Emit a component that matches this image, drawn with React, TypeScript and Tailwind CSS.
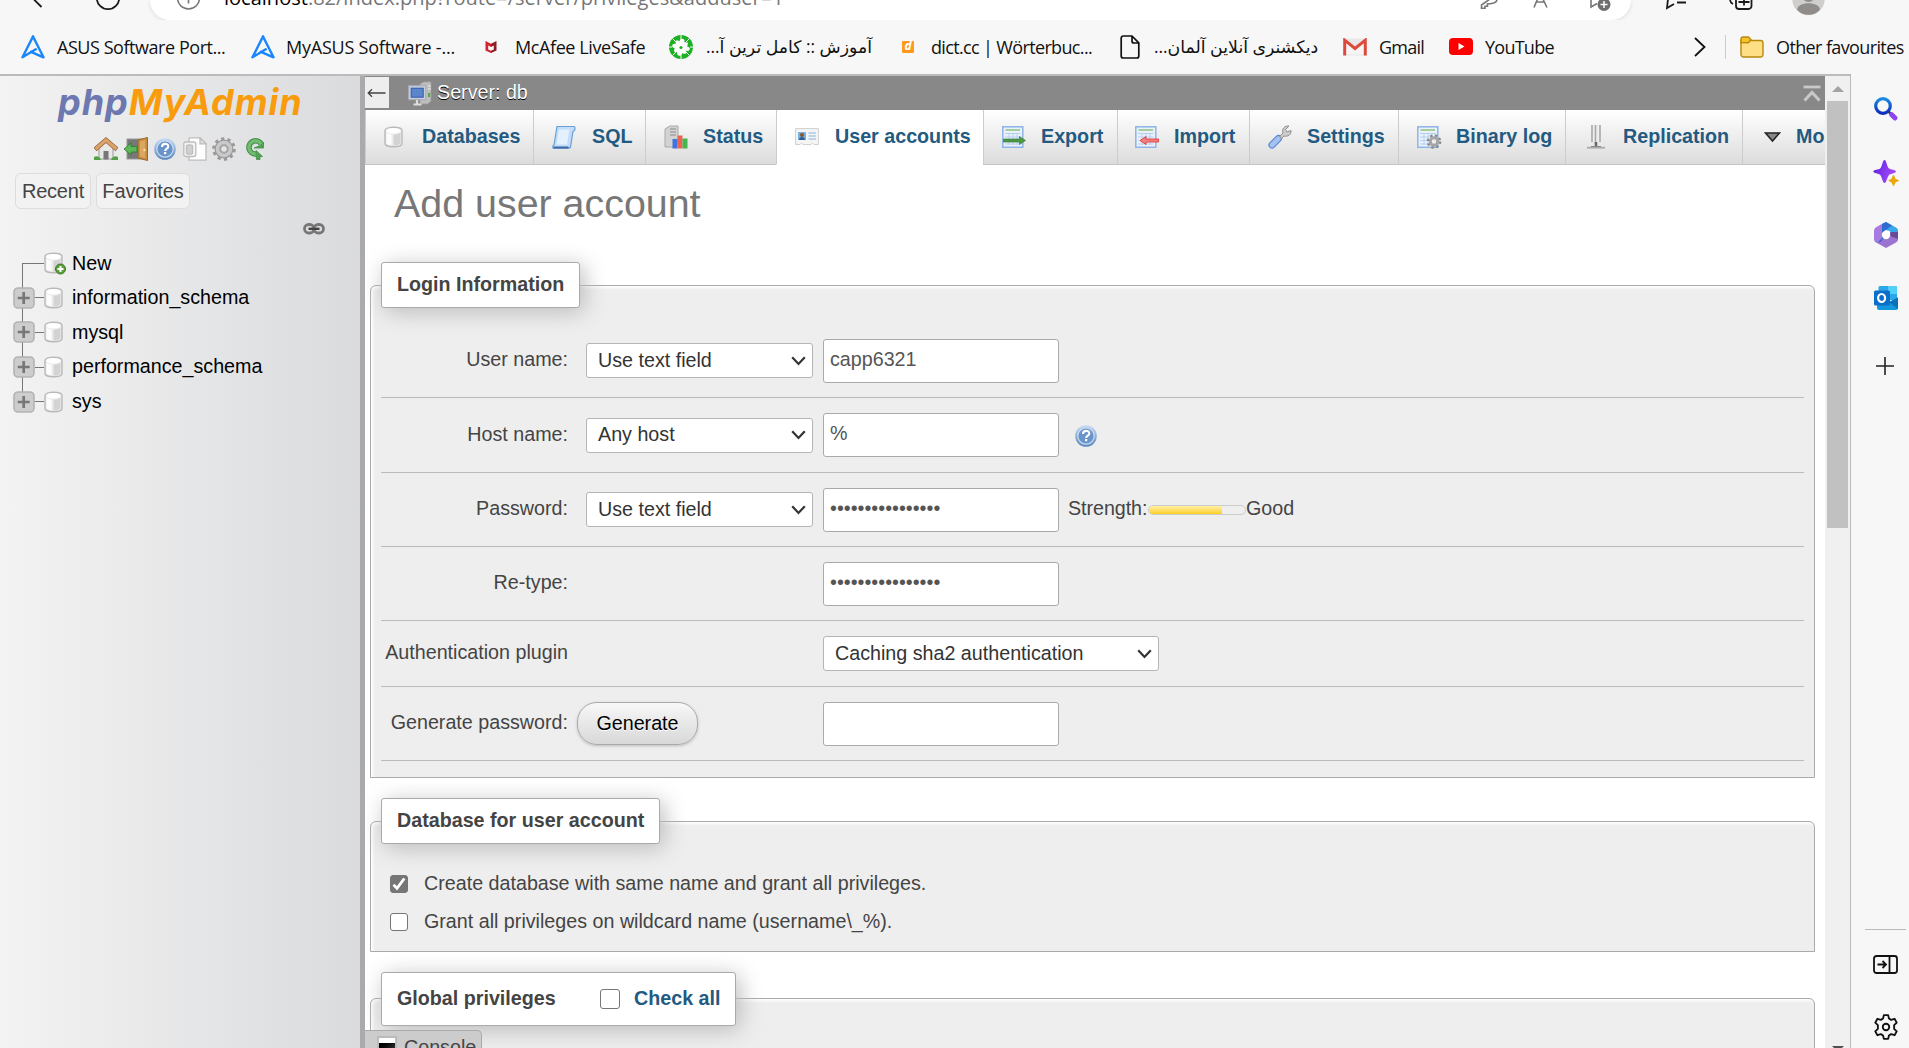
import React from "react";

type Kids = { children?: React.ReactNode };

/* ---------- Browser icons ---------- */

const AsusIcon = () => (
  <svg width="24" height="24" viewBox="0 0 24 24" fill="none" stroke="#1a86fb" strokeWidth="2.4" strokeLinejoin="round" strokeLinecap="round">
    <path d="M12 1.500 1.500 22.300 14.800 14.300" />
    <path d="M12 1.500 22.500 22.300 10 16.800" />
  </svg>
);

const McAfeeIcon = () => (
  <svg width="12" height="12" viewBox="0 0 12 12">
    <path d="M.5 0 6 2.8V6L3.2 4.6v4L6 9.8V12L.5 9.6z" fill="#d2232f" />
    <path d="M11.500 0 6 2.8V6l2.800-1.400v4L6 9.800V12l5.500-2.400z" fill="#8f1d24" />
  </svg>
);

const PuzzleIcon = () => (
  <svg width="24" height="24" viewBox="0 0 24 24">
    <circle cx="12" cy="12" r="12" fill="#1cb022" />
    <path d="M6 6.500h3.500c-1.200-3.800 6-3.800 4.600 0H18v4c4-1.300 4 5 0 3.800V18h-3.700c1.200 3.800-5.800 3.800-4.600 0H6v-3.700c-3.800 1.200-3.800-5.100 0-3.800z" fill="#fff" transform="rotate(12 12 12)" />
    <path d="M12 0v4M12 20v4M0 12h3M21 12h3M3.500 3.500 7 7M17 7l3.500-3.500M3.500 20.500 7 17M17 17l3.500 3.500" stroke="#fff" strokeWidth="1" />
    <circle cx="12" cy="12.500" r="1.600" fill="#1cb022" />
  </svg>
);

const FileIcon = () => (
  <svg width="20" height="24" viewBox="0 0 20 24" fill="none" stroke="#111" strokeWidth="1.700" strokeLinejoin="round">
    <path d="M3.500 1H12l6.800 6.800V21a2 2 0 0 1-2 2H3.200a2 2 0 0 1-2-2V3a2 2 0 0 1 2-2zM12 1v5a2 2 0 0 0 2 2h4.800" />
  </svg>
);

const GmailIcon = () => (
  <svg width="24" height="18" viewBox="0 0 24 18">
    <rect x="1" y="0.500" width="22" height="17" rx="1.500" fill="#e9e7e7" />
    <path d="M3 16.500V3l9 7 9-7v13.500z" fill="#f6f4f4" />
    <path d="M1.700 17.500V2.200L12 10.500 22.300 2.200v15.300" fill="none" stroke="#dc4a3d" strokeWidth="3" />
  </svg>
);

const YoutubeIcon = () => (
  <svg width="24" height="18" viewBox="0 0 24 18">
    <rect width="24" height="17" rx="4" fill="#f00" />
    <path d="M9.500 5v7l6-3.500z" fill="#fff" />
  </svg>
);

const FolderIcon = () => (
  <svg width="24" height="22" viewBox="0 0 24 22" stroke="#b8890b" strokeWidth="1.400">
    <path d="M1 4.500h19.500A2.500 2.500 0 0 1 23 7v11.500a2.500 2.500 0 0 1-2.500 2.500h-17A2.500 2.500 0 0 1 1 18.500z" fill="#ffdf85" />
    <path d="M1 6.500V3a2 2 0 0 1 2-2h5.500l2.500 2.800-2.700 2.900z" fill="#f4c32c" />
  </svg>
);

/* ---------- phpMyAdmin icons ---------- */

const Cylinder = () => (
  <g>
    <path d="M1 4.500C1 .2 18 .2 18 4.500v13c0 4.300-17 4.300-17 0z" fill="#ececec" stroke="#b9b9b9" strokeWidth="1.400" />
    <path d="M2.500 6.500v10.500c1 1.300 3 1.900 5 2.200V8.500c-2-.2-4-.9-5-2z" fill="#fcfcfc" />
    <path d="M9.500 8.700v10.700c2.500 0 5.500-.7 7-2V6.500c-1.500 1.500-4.500 2.200-7 2.200z" fill="#d3d3d3" />
    <ellipse cx="9.500" cy="4.800" rx="7.300" ry="2.800" fill="#fff" />
  </g>
);

const DbIcon = () => (
  <svg width="19" height="22" viewBox="0 0 19 22" className="shrink-0"><Cylinder /></svg>
);

const DbNewIcon = () => (
  <svg width="22" height="23" viewBox="0 0 22 23" className="shrink-0">
    <Cylinder />
    <circle cx="16.500" cy="17" r="5" fill="#5aa13c" stroke="#39761f" />
    <path d="M16.500 14v6M13.500 17h6" stroke="#fff" strokeWidth="2" />
  </svg>
);

const PlusBox = () => (
  <svg width="22" height="22" viewBox="0 0 22 22" className="relative shrink-0">
    <rect x="1" y="1" width="20" height="20" rx="4" fill="#cdcdcd" stroke="#b3b3b3" strokeWidth="1.600" />
    <path d="M10.700 5v12M4.700 11h12" stroke="#777" strokeWidth="2.700" />
  </svg>
);

const HelpIcon = () => (
  <svg width="22" height="22" viewBox="0 0 22 22" className="shrink-0">
    <defs>
      <linearGradient id="hg" x1="0" y1="0" x2="0" y2="1">
        <stop offset="0" stopColor="#c7dcf3" /><stop offset="1" stopColor="#5b87bd" />
      </linearGradient>
    </defs>
    <circle cx="11" cy="11" r="10.800" fill="url(#hg)" />
    <circle cx="11" cy="11" r="8.200" fill="#6894cb" stroke="#c9dcf2" strokeWidth="1.200" />
    <path d="M8 9c0-4.200 6.300-4 6.300-.6 0 2.300-3.100 2.300-3.100 4.500" fill="none" stroke="#fff" strokeWidth="2.100" />
    <rect x="10" y="14" width="2.300" height="2.200" fill="#fff" />
  </svg>
);

const HomeIcon = () => (
  <svg width="24" height="24" viewBox="0 0 24 24">
    <path d="M5 10v12h14V10l-7-6z" fill="#e8e8e6" stroke="#999" />
    <rect x="9.500" y="14" width="5" height="8.500" fill="#777" />
    <path d="M1 12.500 12 3l11 9.500" fill="none" stroke="#9b6a3a" strokeWidth="4.600" />
    <path d="M1.500 12 12 3l10.500 9" fill="none" stroke="#d9a36b" strokeWidth="3" />
    <path d="M0 20c3-2 6 0 7 3H0zM24 20c-3-2-6 0-7 3h7z" fill="#55a047" />
  </svg>
);

const ExitIcon = () => (
  <svg width="24" height="24" viewBox="0 0 24 24">
    <rect x="3" y="2" width="15" height="20" fill="#777" stroke="#999" />
    <path d="M14 3 23.500.5v23L14 21z" fill="#c98f45" stroke="#9c6527" />
    <path d="M16 4.500 21 3v18l-5-1.500z" fill="#dba863" />
    <circle cx="20.500" cy="13" r="1.200" fill="#ffe08a" />
    <path d="M0 12 7 6v3.500h6v5.500H7v3z" fill="#5cb85a" stroke="#2c7a2d" strokeWidth=".8" />
  </svg>
);

const DocsIcon = () => (
  <svg width="24" height="24" viewBox="0 0 24 24" stroke="#bdbdbd" strokeWidth="1.300">
    <path d="M6 .8h11l6 6v16.400H6z" fill="#fdfdfd" />
    <path d="M17 .8v6h6z" fill="#dedede" />
    <rect x=".8" y="5" width="12" height="14.500" rx="2" fill="#f4f4f4" />
    <path d="M3.500 9c0-1.600 6-1.600 6 0v7c0 1.600-6 1.600-6 0z" fill="#d0d0d0" />
  </svg>
);

const CogIcon = () => (
  <svg width="24" height="24" viewBox="0 0 24 24" fill="none">
    <circle cx="12" cy="12" r="10" stroke="#999" strokeWidth="3.600" strokeDasharray="3.140 3.140" />
    <circle cx="12" cy="12" r="6.500" stroke="#9c9c9c" strokeWidth="6" />
    <circle cx="12" cy="12" r="6.500" stroke="#c9c9c9" strokeWidth="3.600" />
    <circle cx="12" cy="12" r="3.400" fill="#e6e6e6" stroke="#999" />
  </svg>
);

const ReloadIcon = () => (
  <svg width="20" height="23" viewBox="0 0 20 23">
    <path d="M16.500 7.500A6.600 6.600 0 1 0 11 17" fill="none" stroke="#3f8f42" strokeWidth="5.600" />
    <path d="M16.500 7.500A6.600 6.600 0 1 0 11 17" fill="none" stroke="#72bb70" strokeWidth="3.600" />
    <path d="M9 11h9.500V5.500l-3 3zM11 13.500l6.500 6h-2.500v3h-3.500z" fill="#51a353" stroke="#3f8f42" strokeWidth=".8" />
  </svg>
);

const ChainIcon = () => (
  <svg width="22" height="12" viewBox="0 0 22 12" fill="none">
    <rect x="1.500" y="1.500" width="9.500" height="8.500" rx="4.200" stroke="#777" strokeWidth="2.800" />
    <rect x="11" y="1.500" width="9.500" height="8.500" rx="4.200" stroke="#777" strokeWidth="2.800" />
    <path d="M5.500 5.800h11" stroke="#444" strokeWidth="2.400" />
  </svg>
);

const ServerIcon = () => (
  <svg width="24" height="25" viewBox="0 0 24 25">
    <path d="M12 3 16 .8h7V20l-3 3h-8z" fill="#bdbdbd" stroke="#999" strokeWidth=".8" />
    <path d="M20 5h3M20 8h3" stroke="#eee" strokeWidth="1.200" />
    <rect x="20" y="12" width="2" height="4" fill="#4fae46" />
    <rect x=".7" y="4.700" width="17" height="14" fill="#c9d0dc" stroke="#a7abb3" />
    <rect x="3.200" y="7.200" width="12" height="9" fill="#5c86cc" stroke="#2f57a5" />
    <path d="M9 19v4M5.500 23.500h8" stroke="#ddd" strokeWidth="2.200" />
  </svg>
);

const SqlIcon = () => (
  <svg width="24" height="24" viewBox="0 0 24 24">
    <path d="M5 1.500h17c1.500 0 1.500 4.500-1 5L18.500 22c-.3 1.200-1 1.200-2 1.200H1.500C.3 23.200.6 20 2 20z" fill="#c3dcf7" stroke="#6b9fd6" strokeWidth="1.200" />
    <path d="M7 4.500h10.500L15 19.500H4.500z" fill="#e3f0fd" />
    <path d="M1.500 22.500h15" stroke="#3d68a8" strokeWidth="2" />
  </svg>
);

const StatusIcon = () => (
  <svg width="25" height="24" viewBox="0 0 25 24">
    <path d="M1 4 6 1h8v17l-5 4H1z" fill="#d2d2d2" stroke="#a9a9a9" />
    <path d="M6 4h6M6 7h6M6 10h6" stroke="#8c8c8c" strokeWidth="1.200" />
    <rect x="8.500" y="14" width="5" height="9.500" fill="#3f73e0" />
    <rect x="13.500" y="10.500" width="5" height="13" fill="#ec6251" />
    <rect x="18.500" y="13.500" width="5" height="10" fill="#45b650" />
  </svg>
);

const UserCardIcon = () => (
  <svg width="24" height="18" viewBox="0 0 24 18">
    <path d="M.6.6h22.800v16H19l-1.500-1.500L16 16.600H8l-1.500-1.500L5 16.600H.6z" fill="#f5f5f5" stroke="#cfcfcf" />
    <rect x="3" y="4" width="8" height="8" fill="#78b0e8" />
    <circle cx="7" cy="7" r="2.100" fill="#8a5a2c" />
    <path d="M4 12c0-4 6-4 6 0z" fill="#2d5f9e" />
    <path d="M13.500 5H21M13.500 8H21M13.500 11H21" stroke="#a9c9e6" strokeWidth="1.400" />
  </svg>
);

const Sheet = () => (
  <g>
    <rect x=".8" y=".8" width="20" height="20.500" fill="#e9f1fc" stroke="#8fb3e6" strokeWidth="1.500" />
    <path d="M3.500 4h14.500" stroke="#8ec27e" strokeWidth="1.500" />
    <path d="M3 7.500h15.500M3 11h15.500M3 14.500h15.500M3 18h15.500M7 7v12M11 7v12M15 7v12" stroke="#b9cff0" strokeWidth="1" />
  </g>
);

const ExportIcon = () => (
  <svg width="24" height="22" viewBox="0 0 24 22"><Sheet />
    <path d="M1.500 13h16v-2.500l6 4-6 4v-2.500h-16z" fill="#4d9b45" stroke="#2c6e27" strokeWidth=".6" />
  </svg>
);
const ImportIcon = () => (
  <svg width="24" height="22" viewBox="0 0 24 22"><Sheet />
    <path d="M23.500 13H11v-2.500l-6 4 6 4v-2.500h12.500z" fill="#f08080" stroke="#e23b3b" strokeWidth=".9" />
  </svg>
);
const SettingsIcon = () => (
  <svg width="24" height="24" viewBox="0 0 24 24" strokeLinecap="round">
    <path d="M4 20 10.500 13.500" stroke="#5c86cf" strokeWidth="7.200" />
    <path d="M4 20 10.500 13.500" stroke="#a4c2f2" strokeWidth="4.800" />
    <path d="M12 11 15 8c-1.500-4 1.500-7.500 6-7l-3.500 3.500 1.500 2.500 4-1.500c.5 4-3 6.500-7 5.500l-2.500 2.500z" fill="#cbcbcb" stroke="#8e8e8e" />
  </svg>
);
const BinlogIcon = () => (
  <svg width="25" height="23" viewBox="0 0 25 23"><Sheet />
    <circle cx="17" cy="15.500" r="6" fill="none" stroke="#8a8a8a" strokeWidth="2.600" strokeDasharray="2.360 2.360" />
    <circle cx="17" cy="15.500" r="3.700" fill="#eee" stroke="#a5a5a5" strokeWidth="3" />
  </svg>
);
const ReplicationIcon = () => (
  <svg width="18" height="24" viewBox="0 0 18 24">
    <path d="M5 0v14l2 3.500h4l2-3.500V0" fill="#eee" />
    <path d="M5 0v17M8.500 0v19M13 0v17" stroke="#a9a9a9" strokeWidth="1.600" />
    <path d="M9 17v4" stroke="#666" strokeWidth="2.500" />
    <path d="M0 22.700h18" stroke="#aaa" strokeWidth="1.800" />
    <path d="M4 21.500h10" stroke="#888" strokeWidth="1" />
  </svg>
);

/* ---------- Browser chrome ---------- */

function AddressRow() {
  return (
    <div className="flex h-[20px] items-start overflow-hidden">
      <svg width="150" height="20" viewBox="0 0 150 20" fill="none" stroke="#1b1b1b" strokeWidth="1.800" className="shrink-0">
        <path d="M33.500-1 41.500 7" />
        <circle cx="108" cy="-2" r="11.200" />
      </svg>
      <div className="flex h-[20px] w-[1481px] shrink-0 items-start overflow-hidden rounded-b-[20px] bg-white shadow-[0_1px_4px_#ddd]">
        <svg width="74" height="20" viewBox="0 0 74 20" fill="none" stroke="#777" strokeWidth="1.600" className="shrink-0">
          <circle cx="38.500" cy="-2" r="11" />
          <path d="M38.500-2v5.500" />
        </svg>
        <div className="-mt-[18px] h-[30px] w-[1256px] shrink-0 whitespace-nowrap text-[20px] leading-[32px] tracking-[0.010px] text-[#767676]">
          <span className="text-black">localhost</span>:82/index.php?route=/server/privileges&amp;adduser=1
        </div>
        <svg width="151" height="20" viewBox="1480 0 151 20" fill="none" stroke="#777" strokeWidth="1.600">
          <path d="M1490-1l-8.500 6v3.200h3.500v-2h2.500v-2.500h3l4-1c2-1 3-3 2-5" />
          <path d="M1534 7.500 1540-7l7 14.500M1536 2h9" />
          <path d="M1591-1v8l6-3.500" />
          <circle cx="1604" cy="4.500" r="6.500" fill="#6e6e6e" stroke="none" />
          <path d="M1604 1v7M1600.500 4.500h7" stroke="#fff" strokeWidth="1.500" />
        </svg>
      </div>
      <svg width="278" height="20" viewBox="1631 0 278 20" fill="none" stroke="#1b1b1b" strokeWidth="1.800" className="shrink-0">
        <path d="M1668-1l-1 9 7-4M1677 2.500h9" />
        <path d="M1736-1v7a3 3 0 0 0 3 3h9.500a3 3 0 0 0 3-3v-7M1744-1v6.500M1738.500 2h11M1730-1c0 2 1 4 3 5" />
        <circle cx="1808.500" cy="-1" r="16.200" fill="#d0cecc" stroke="none" />
        <circle cx="1808.500" cy="-4" r="6" fill="#8f8c8a" stroke="none" />
        <path d="M1797 9.500c1-8.500 22-8.500 23 0-5 7-18 7-23 0z" fill="#8f8c8a" stroke="none" />
      </svg>
    </div>
  );
}

function Mark({ icon, box, text, children }: Kids & { icon: React.ReactNode; box: string; text: string }) {
  return (
    <div className={`flex shrink-0 items-center ${box}`}>
      {icon}
      <span className={`whitespace-nowrap ${text}`}>{children}</span>
    </div>
  );
}

function Bookmarks() {
  return (
    <div className="flex h-[54px] items-center pb-px pl-[21px] text-[18px] leading-[24px] text-[#111]">
      <Mark icon={<AsusIcon />} box="w-[230px]" text="ml-[12px] tracking-[-0.450px]">ASUS Software Port...</Mark>
      <Mark icon={<AsusIcon />} box="w-[234px]" text="ml-[11px] tracking-[-0.220px]">MyASUS Software -...</Mark>
      <Mark icon={<McAfeeIcon />} box="w-[184px]" text="ml-[18px] tracking-[-0.400px]">McAfee LiveSafe</Mark>
      <Mark icon={<PuzzleIcon />} box="w-[233px]" text="ml-[13px] [direction:rtl] text-[17.300px]">آموزش :: کامل ترین آ...</Mark>
      <Mark icon={<span className="flex h-[12px] w-[12px] items-center justify-center rounded-[1px] bg-[#ff9a1f] pb-px text-[12px] font-bold italic leading-[12px] text-white">d</span>} box="w-[218px]" text="ml-[17px] tracking-[-0.650px]">dict.cc | Wörterbuc...</Mark>
      <Mark icon={<FileIcon />} box="w-[223px]" text="ml-[14px] [direction:rtl] text-[17.300px]">دیکشنری آنلاین آلمان...</Mark>
      <Mark icon={<GmailIcon />} box="w-[106px]" text="ml-[12px] tracking-[-0.750px]">Gmail</Mark>
      <Mark icon={<YoutubeIcon />} box="w-[245px]" text="ml-[12px] tracking-[-0.750px]">YouTube</Mark>
      <svg width="12" height="20" viewBox="0 0 12 20" fill="none" stroke="#111" strokeWidth="1.800" className="shrink-0"><path d="M1 1l9.500 9L1 19" /></svg>
      <div className="ml-[19px] h-[24px] w-px shrink-0 bg-[#ccc]" />
      <Mark icon={<FolderIcon />} box="ml-[14px]" text="ml-[12px] tracking-[-0.620px]">Other favourites</Mark>
    </div>
  );
}

/* ---------- Navigation panel ---------- */

const databases = ["information_schema", "mysql", "performance_schema", "sys"];

function NavPanel() {
  return (
    <aside className="flex h-full w-[360px] shrink-0 flex-col bg-linear-to-r from-[#f3f3f3] to-[#dadbdd]">
      <div className="ml-[58px] mt-[1px] h-[50px] whitespace-nowrap font-[Inter] text-[36px] font-bold italic leading-[50px] tracking-[1px] text-[#6c78af]">
        php<span className="text-[#f89c0e]">MyAdmin</span>
      </div>
      <div className="ml-[94px] mt-[9px] flex h-[25px] items-center">
        <HomeIcon />
        <span className="ml-[6px]"><ExitIcon /></span>
        <span className="ml-[6px]"><HelpIcon /></span>
        <span className="ml-[7px]"><DocsIcon /></span>
        <span className="ml-[5px]"><CogIcon /></span>
        <span className="ml-[9px]"><ReloadIcon /></span>
      </div>
      <div className="ml-[15px] mt-[12px] flex gap-[5px] text-[20px] text-[#444]">
        <div className="flex h-[36px] w-[76px] items-center justify-center rounded-[6px] border border-[#ddd] bg-[#f2f2f2] tracking-[-0.200px]">Recent</div>
        <div className="flex h-[36px] w-[94px] items-center justify-center rounded-[6px] border border-[#ddd] bg-[#f2f2f2] tracking-[-0.100px]">Favorites</div>
      </div>
      <div className="ml-[303px] mt-[14px] h-[12px]"><ChainIcon /></div>
      <div className="relative mt-[11px] text-[19.700px] text-black">
        <div className="absolute left-[22px] top-[17px] h-[132px] w-px bg-[#777]" />
        <div className="flex h-[34.600px] items-center">
          <div className="ml-[22px] h-px w-[22px] bg-[#777]" />
          <DbNewIcon />
          <span className="ml-[6px]">New</span>
        </div>
        {databases.map((d) => (
          <div key={d} className="flex h-[34.600px] items-center pl-[13px]">
            <PlusBox />
            <div className="h-px w-[9px] bg-[#777]" />
            <DbIcon />
            <span className="ml-[9px]">{d}</span>
          </div>
        ))}
      </div>
    </aside>
  );
}

/* ---------- Main content ---------- */

function Tab({ w, pad, icon, iconW, active, children }: Kids & { w: string; pad: string; icon: React.ReactNode; iconW: string; active?: boolean }) {
  const look = active
    ? "border-l-[#ccc] border-b-white bg-white"
    : "border-l-[#ccc] border-b-[#c4c4c4] bg-linear-to-b from-white to-[#dcdcdc]";
  return (
    <div className={`flex h-[55px] shrink-0 items-center border-b border-l ${look} ${w} ${pad}`}>
      <span className={`flex shrink-0 items-center ${iconW}`}>{icon}</span>
      <span className="whitespace-nowrap pb-px text-[19.700px] font-bold text-[#235a81]">{children}</span>
    </div>
  );
}

function Tabs() {
  return (
    <nav className="flex h-[55px] shrink-0 overflow-hidden">
      <Tab w="w-[168px]" pad="pl-[18px]" iconW="w-[38px]" icon={<DbIcon />}>Databases</Tab>
      <Tab w="w-[112px]" pad="pl-[18px]" iconW="w-[40px]" icon={<SqlIcon />}>SQL</Tab>
      <Tab w="w-[131px]" pad="pl-[18px]" iconW="w-[39px]" icon={<StatusIcon />}>Status</Tab>
      <Tab w="w-[207px]" pad="pl-[18px]" iconW="w-[40px]" icon={<UserCardIcon />} active>User accounts</Tab>
      <Tab w="w-[134px]" pad="pl-[18px]" iconW="w-[39px]" icon={<ExportIcon />}>Export</Tab>
      <Tab w="w-[132px]" pad="pl-[17px]" iconW="w-[39px]" icon={<ImportIcon />}>Import</Tab>
      <Tab w="w-[149px]" pad="pl-[18px]" iconW="w-[39px]" icon={<SettingsIcon />}>Settings</Tab>
      <Tab w="w-[167px]" pad="pl-[18px]" iconW="w-[39px]" icon={<BinlogIcon />}>Binary log</Tab>
      <Tab w="w-[177px]" pad="pl-[21px]" iconW="w-[36px]" icon={<ReplicationIcon />}>Replication</Tab>
      <Tab
        w="w-[120px]" pad="pl-[21px]" iconW="w-[32px]"
        icon={<svg width="17" height="11" viewBox="0 0 17 11"><path d="M1.500 1h14l-7 8z" fill="#888" stroke="#222" strokeWidth="1.500" /></svg>}
      >
        More
      </Tab>
    </nav>
  );
}

function Legend({ size, children }: Kids & { size: string }) {
  return (
    <div className={`relative ml-[10px] flex items-center rounded-[3px] border border-[#aaa] bg-white pl-[15px] text-[19.700px] font-bold text-[#444] shadow-[4px_4px_22px_#bbb] ${size}`}>
      {children}
    </div>
  );
}

function Group({ box, children }: Kids & { box: string }) {
  return (
    <section className={`ml-[5px] w-[1445px] shrink-0 rounded-t-[6px] border border-[#aaa] bg-[#eee] shadow-[inset_2px_2px_3px_#fff] ${box}`}>
      {children}
    </section>
  );
}

function Row({ label, h, children }: Kids & { label: string; h: string }) {
  return (
    <div className={`ml-[10px] flex w-[1423px] items-center border-b border-[#bbb] text-[19.700px] ${h}`}>
      <span className="w-[187px] shrink-0 whitespace-nowrap pb-px text-right">{label}</span>
      {children}
    </div>
  );
}

function Select({ box, children }: Kids & { box: string }) {
  return (
    <div className={`flex h-[35px] items-center justify-between rounded-[3px] border border-[#b5b5b5] bg-white pl-[11px] pr-[6px] text-[#333] ${box}`}>
      <span>{children}</span>
      <svg width="15" height="10" viewBox="0 0 15 10" fill="none" stroke="#333" strokeWidth="2.200"><path d="M1.200 1.200 7.500 8l6.300-6.800" /></svg>
    </div>
  );
}

function Field({ box, children }: Kids & { box: string }) {
  return (
    <div className={`flex h-[44px] w-[236px] items-center rounded-[3px] border border-[#aaa] bg-white pb-[2px] pl-[6px] text-[#555] ${box}`}>{children}</div>
  );
}

function Check({ checked, size }: { checked?: boolean; size: string }) {
  return (
    <span className={`flex shrink-0 items-center justify-center rounded-[3px] border-[1.500px] border-[#767676] ${checked ? "bg-[#767676]" : "bg-white"} ${size}`}>
      {checked && (
        <svg width="16" height="16" viewBox="0 0 16 16" fill="none" stroke="#fff" strokeWidth="2.800"><path d="M2.500 8.800 6 12.300 13.300 2.500" /></svg>
      )}
    </span>
  );
}

function MainPanel() {
  return (
    <main className="relative flex h-full w-[1460px] shrink-0 flex-col overflow-hidden bg-white text-[#444]">
      <header className="flex h-[34px] shrink-0 items-center bg-[#888]">
        <div className="-mt-px flex h-[31px] w-[24px] items-center justify-start bg-[#eee] pl-[2px]">
          <svg width="19" height="10" viewBox="0 0 19 10" fill="none" stroke="#444" strokeWidth="1.300"><path d="M1 5h17.500M5 1.300 1.200 5 5 8.700" /></svg>
        </div>
        <span className="ml-[19px]"><ServerIcon /></span>
        <span className="ml-[5px] pb-px text-[19.700px] text-white [text-shadow:0_1px_0_#000]">Server: db</span>
        <svg width="18" height="17" viewBox="0 0 18 17" fill="none" stroke="#c9c9c9" className="ml-auto mr-[4px]">
          <path d="M.5 2h17" strokeWidth="2.800" /><path d="M1.500 15.500 9 7.500l7.500 8" strokeWidth="3" />
        </svg>
      </header>
      <Tabs />
      <h2 className="h-[120px] shrink-0 pl-[29px] pt-[15px] text-[39.400px] leading-[46px] tracking-[0px] text-[#777]">Add user account</h2>

      <Group box="h-[493px]">
        <Legend size="-mt-[24px] h-[46px] w-[199px]">Login Information</Legend>
        <div className="pt-[16px]">
          <Row label="User name:" h="h-[74px]">
            <Select box="ml-[18px] w-[227px]">Use text field</Select>
            <Field box="ml-[10px]">capp6321</Field>
          </Row>
          <Row label="Host name:" h="h-[75px]">
            <Select box="ml-[18px] w-[227px]">Any host</Select>
            <Field box="ml-[10px]">%</Field>
            <span className="ml-[16px] mt-[2px]"><HelpIcon /></span>
          </Row>
          <Row label="Password:" h="h-[74px]">
            <Select box="ml-[18px] w-[227px]">Use text field</Select>
            <Field box="ml-[10px]">••••••••••••••••</Field>
            <span className="ml-[9px] w-[80px] pb-px tracking-[-0.050px]">Strength:</span>
            <div className="h-[10px] w-[98px] overflow-hidden rounded-[5px] border border-[#ccc] bg-[#eee]">
              <div className="h-full w-[73px] bg-linear-to-b from-[#fff0a0] to-[#ffcf00]" />
            </div>
            <span className="pb-px">Good</span>
          </Row>
          <Row label="Re-type:" h="h-[74px]">
            <Field box="ml-[255px]">••••••••••••••••</Field>
          </Row>
          <Row label="Authentication plugin" h="h-[66px]">
            <Select box="ml-[255px] w-[336px]">Caching sha2 authentication</Select>
          </Row>
          <Row label="Generate password:" h="h-[74px]">
            <div className="ml-[9px] flex h-[43px] w-[121px] items-center justify-center rounded-[20px] border border-[#aaa] bg-linear-to-b from-[#f8f8f8] to-[#d8d8d8] text-black shadow-[0_1px_3px_#bbb] [text-shadow:0_1px_0_#fff]">Generate</div>
            <Field box="ml-[125px]" />
          </Row>
        </div>
      </Group>

      <Group box="mt-[43px] h-[131px]">
        <Legend size="-mt-[24px] h-[46px] w-[279px]">Database for user account</Legend>
        <div className="ml-[19px] mt-[21px] flex flex-col text-[19.700px]">
          <div className="flex h-[38px] items-center gap-[16px]"><Check checked size="h-[18px] w-[18px]" /><span>Create database with same name and grant all privileges.</span></div>
          <div className="flex h-[38px] items-center gap-[16px]"><Check size="h-[18px] w-[18px]" /><span>Grant all privileges on wildcard name (username\_%).</span></div>
        </div>
      </Group>

      <Group box="mt-[46px] h-[120px]">
        <Legend size="-mt-[27px] h-[54px] w-[355px]">
          <span className="w-[203px]">Global privileges</span>
          <Check size="h-[20px] w-[20px]" />
          <span className="ml-[14px] text-[#235a81]">Check all</span>
        </Legend>
      </Group>

      <div className="absolute bottom-0 left-0 flex h-[18px] w-[117px] items-start overflow-hidden rounded-tr-[5px] border-r border-t border-[#aaa] bg-[#ccc] pl-[12px]">
        <div className="mt-[5px] h-[24px] w-[20px] shrink-0 border-2 border-[#bbb] bg-white pt-[5px]"><div className="h-[14px] bg-linear-to-br from-black to-[#555]" /></div>
        <span className="ml-[7px] mt-[4px] text-[19.700px] leading-[24px]">Console</span>
      </div>
    </main>
  );
}

function Scrollbar() {
  return (
    <div className="flex h-full w-[26px] shrink-0 flex-col items-center border-r border-[#bbb] bg-[#f0f0f0]">
      <svg width="12" height="6" viewBox="0 0 12 6" className="mt-[10px] shrink-0"><path d="M0 6 6 0l6 6z" fill="#a3a3a3" /></svg>
      <div className="mt-[9px] h-[427px] w-[21px] bg-[#c1c1c1]" />
      <svg width="12" height="6" viewBox="0 0 12 6" className="mt-auto -mb-[4px] shrink-0"><path d="M0 0h12L6 6z" fill="#505050" /></svg>
    </div>
  );
}

function EdgeSidebar() {
  return (
    <div className="flex h-full w-[58px] shrink-0 flex-col items-center bg-[#f7f7f7] pl-[11px]">
      <svg width="24" height="24" viewBox="0 0 24 24" fill="none" className="mt-[23px]">
        <defs><linearGradient id="sg" x1="0" y1="0" x2="0" y2="1"><stop offset="0" stopColor="#1d8be0" /><stop offset="1" stopColor="#0b2cc0" /></linearGradient></defs>
        <circle cx="9" cy="9" r="7.300" stroke="url(#sg)" strokeWidth="3.200" />
        <path d="M14.500 14.500 17 17" stroke="#26336b" strokeWidth="2.500" />
        <path d="M17.500 17.500 21 21" stroke="#8b45ee" strokeWidth="4.800" strokeLinecap="round" />
      </svg>
      <svg width="26" height="26" viewBox="0 0 26 26" className="mt-[39px]">
        <defs><linearGradient id="pg" x1="0" y1="0" x2="1" y2="0.400"><stop offset="0" stopColor="#5a1ee0" /><stop offset="1" stopColor="#a64bfa" /></linearGradient></defs>
        <path d="M11.500 0c2 0 2.500 7 4.500 8.500 1.500 1 7 1.200 7 3s-5 2-6.700 3.300c-2 1.500-2.800 8.200-4.800 8.200s-2.500-6.500-4.500-8.200C5.500 13.300.3 13.300.3 11.500S5.500 9.700 7.200 8.500C9.200 7 9.500 0 11.500 0z" fill="url(#pg)" />
        <path d="M20.500 15c1 0 1.200 3 2.200 3.900.8.600 3.300.6 3.300 1.600s-2.300 1.100-3.200 1.800c-1 .7-1.300 3.700-2.300 3.700s-1.300-3-2.300-3.700-2.700-.8-2.700-1.800 1.800-1 2.700-1.600c1-.7 1.300-3.900 2.300-3.900z" fill="#eba70c" />
      </svg>
      <svg width="24" height="26" viewBox="0 0 24 26" className="mt-[36px]">
        <path d="M8 2 12 0l10 5.500c1.500 1 2 2 2 3.500v6L16.500 12 16 9 9 7.500z" fill="#3aa7e8" />
        <path d="M8 2C2 5 0 6 0 9v8c0 2 1 3.500 3 4l5-2V10z" fill="#a77be0" />
        <path d="M8 2l4-2 6 3.500-7 5-3 3V19l-5 2 5-5z" fill="#2f6cd0" />
        <path d="M24 13v4c0 1.500-.5 2.500-2 3.500L12 26l-9-5 8-5 4-.5 1.500-4.500z" fill="#9a74d0" />
        <path d="M24 10v7l-8-3 .5-4z" fill="#6a4a98" />
        <path d="M3 21l8-5-3-3v6z" fill="#2760c4" />
        <circle cx="12" cy="13" r="4.200" fill="#fff" />
      </svg>
      <svg width="24" height="24" viewBox="0 0 24 24" className="mt-[38px]">
        <path d="M4.500 1.500A1.500 1.500 0 0 1 6 0h15.500A1.500 1.500 0 0 1 23 1.500V14H4.500z" fill="#2aa8ea" />
        <path d="M14 0h7.500A1.500 1.500 0 0 1 23 1.500V8h-9z" fill="#50d0fa" />
        <path d="M3 12l12 4 9-4.500V22a2 2 0 0 1-2 2H5a2 2 0 0 1-2-2z" fill="#1296dc" />
        <path d="M15 16l9 7V11.500z" fill="#0a70b8" />
        <rect y="4.500" width="16" height="15" rx="1.500" fill="#0a6fc9" />
        <ellipse cx="7.600" cy="12" rx="3.500" ry="4" fill="none" stroke="#fff" strokeWidth="2.200" />
      </svg>
      <svg width="18" height="18" viewBox="0 0 18 18" stroke="#222" strokeWidth="1.600" className="mt-[47px] mr-[2px]"><path d="M9 0v18M0 9h18" /></svg>
      <div className="mt-auto h-px w-[41px] bg-[#bbb]" />
      <svg width="25" height="19" viewBox="0 0 25 19" fill="none" stroke="#111" strokeWidth="1.800" className="mt-[25px]">
        <rect x="1" y="1" width="23" height="17" rx="2.500" /><path d="M16.500 1v17M4.500 9.500h8M9.500 6l3.500 3.500L9.500 13" />
      </svg>
      <svg width="26" height="26" viewBox="0 0 24 24" fill="none" stroke="#111" strokeWidth="1.700" strokeLinejoin="round" className="mb-[8px] mt-[40px]">
        <circle cx="12" cy="12" r="3" />
        <path d="M10 1h4l.7 3.200 2 1.200 3.200-1 2 3.600-2.400 2.300v3.400l2.400 2.300-2 3.600-3.200-1-2 1.200L14 23h-4l-.7-3.200-2-1.200-3.200 1-2-3.600 2.400-2.300v-3.400L2.100 8l2-3.600 3.200 1 2-1.200z" />
      </svg>
    </div>
  );
}

export default function App() {
  return (
    <div className="flex h-[1048px] w-[1909px] flex-col overflow-hidden bg-[#f7f7f7] font-['Liberation_Sans',Arial,sans-serif]">
      <div className="h-[74px] shrink-0 font-['Open_Sans','Noto_Sans','DejaVu_Sans',sans-serif]">
        <AddressRow />
        <Bookmarks />
      </div>
      <div className="flex min-h-0 flex-1">
        <div className="flex h-full w-[1851px] shrink-0 flex-col">
          <div className="h-[2px] shrink-0 bg-[#bbb]" />
          <div className="flex min-h-0 flex-1">
            <NavPanel />
            <div className="h-full w-[5px] shrink-0 bg-[#aaa]" />
            <MainPanel />
            <Scrollbar />
          </div>
        </div>
        <EdgeSidebar />
      </div>
    </div>
  );
}
